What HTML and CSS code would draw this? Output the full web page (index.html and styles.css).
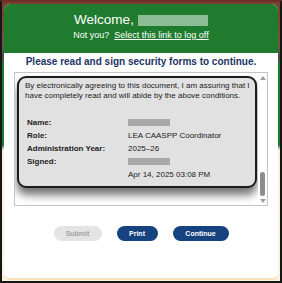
FILE: index.html
```html
<!DOCTYPE html>
<html lang="en">
<head>
  <meta charset="UTF-8">
  <title>Security Forms</title>
  <link rel="stylesheet" href="styles.css">
</head>
<body>
  <div class="marco">
    <div class="panel">
      <div class="cabecera">
        <h1>Welcome, <span class="borroso borroso-nombre"></span></h1>
        <p class="no-eres">Not you?&nbsp; <a href="#">Select this link to log off</a></p>
      </div>

      <h2>Please read and sign security forms to continue.</h2>

      <div class="caja">
        <div class="contenido">
          <div class="tarjeta">
            <p class="aviso">By electronically agreeing to this document, I am assuring that I have completely read and will abide by the above conditions.</p>
            <div class="datos">
              <span class="etiqueta">Name:</span>
              <span><span class="borroso borroso-dato"></span></span>
              <span class="etiqueta">Role:</span>
              <span>LEA CAASPP Coordinator</span>
              <span class="etiqueta">Administration Year:</span>
              <span>2025–26</span>
              <span class="etiqueta">Signed:</span>
              <span><span class="borroso borroso-dato"></span></span>
              <span></span>
              <span>Apr 14, 2025 03:08 PM</span>
            </div>
          </div>
        </div>
        <div class="barra">
          <span class="flecha arriba"></span>
          <span class="pulgar"></span>
          <span class="flecha abajo"></span>
        </div>
      </div>

      <div class="botones">
        <button class="boton desactivado" disabled>Submit</button>
        <button class="boton">Print</button>
        <button class="boton">Continue</button>
      </div>
    </div>
  </div>
</body>
</html>
```

FILE: styles.css
```css
html, body {
  margin: 0;
  height: 100%;
}

body {
  font-family: "Liberation Sans", Arial, sans-serif;
  background: linear-gradient(to bottom, #7a3b2c 0, #6d5a44 45px, #4a4a40 58px, #1f7a2e 62px, #1f7a2e 145px, #fbf0d4 150px, #fdf3dc 100%);
}

.marco {
  box-sizing: border-box;
  height: 100%;
  border: 2px solid #161616;
  border-top-color: #6b2f28;
  padding: 2px 2px 1px 2px;
  display: flex;
}

.panel {
  flex: 1;
  background: #fff;
  border-radius: 6px;
  border-bottom: 2px solid #f6e2b8;
  overflow: hidden;
  display: flex;
  flex-direction: column;
  align-items: center;
}

.cabecera {
  align-self: stretch;
  background: #1f7c2f;
  color: #fff;
  text-align: center;
  height: 49px;
  padding-top: 8px;
  box-sizing: border-box;
}

h1 {
  margin: 0;
  font-size: 13.5px;
  font-weight: normal;
  line-height: 16px;
  display: flex;
  justify-content: center;
  align-items: center;
  gap: 4px;
}

.borroso {
  display: inline-block;
  filter: blur(0.6px);
}

.borroso-nombre {
  width: 70px;
  height: 11px;
  background: #8dbd94;
}

.no-eres {
  margin: 2px 0 0;
  font-size: 9px;
  line-height: 11px;
}

.no-eres a {
  color: #fff;
}

h2 {
  margin: 3px 0 0;
  font-size: 10px;
  line-height: 12px;
  color: #1b3566;
}

.caja {
  margin-top: 4px;
  width: 254px;
  height: 134px;
  box-sizing: border-box;
  border: 1px solid #c4c4c4;
  display: flex;
}

.contenido {
  flex: 1;
  padding: 3px 1px 0 2px;
  overflow: hidden;
}

.tarjeta {
  background: #e1e1e1;
  border: 2px solid #1c1c1c;
  border-radius: 9px;
  padding: 3px 2px 5px 6px;
  font-size: 8px;
  line-height: 10px;
  color: #222;
  box-shadow: 0 7px 8px rgba(0, 0, 0, 0.55);
}

.aviso {
  margin: 0 0 15px;
}

.datos {
  display: grid;
  grid-template-columns: 101px 1fr;
  line-height: 13px;
  padding-left: 2px;
}

.etiqueta {
  font-weight: bold;
}

.borroso-dato {
  width: 42px;
  height: 7px;
  background: #a8a8a8;
  vertical-align: middle;
}

.barra {
  width: 9px;
  display: flex;
  flex-direction: column;
  align-items: center;
  padding: 3px 0 2px;
  box-sizing: border-box;
}

.flecha {
  width: 0;
  height: 0;
  border-left: 3px solid transparent;
  border-right: 3px solid transparent;
}

.arriba {
  border-bottom: 4px solid #a0a0a0;
}

.abajo {
  border-top: 4px solid #a0a0a0;
}

.pulgar {
  margin-top: auto;
  margin-bottom: 3px;
  width: 5px;
  height: 24px;
  border-radius: 3px;
  background: #8c8c8c;
}

.botones {
  margin-top: 20px;
  display: flex;
  gap: 15px;
}

.boton {
  font-family: "Liberation Sans", Arial, sans-serif;
  font-size: 7px;
  font-weight: bold;
  height: 15px;
  padding: 0;
  border: none;
  border-radius: 8px;
  background: #16427f;
  color: #fff;
  cursor: pointer;
  width: 41px;
}

.boton:last-child {
  width: 56px;
}

.desactivado {
  width: 48px;
  background: #e4e4e4;
  color: #a3a3a3;
  cursor: default;
}
```
